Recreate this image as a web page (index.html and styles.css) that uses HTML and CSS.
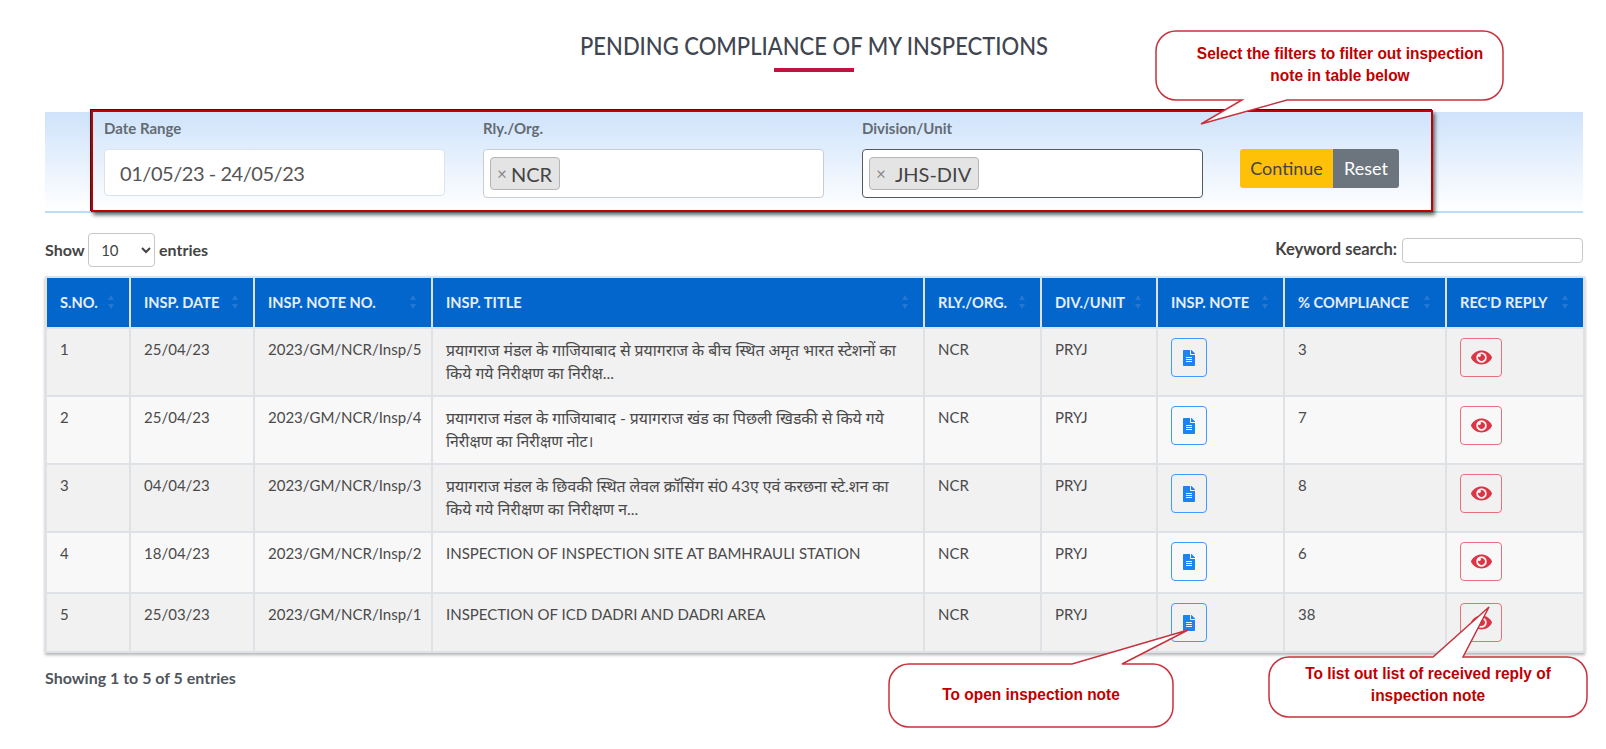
FILE: index.html
```html
<!DOCTYPE html>
<html lang="en">
<head>
<meta charset="utf-8">
<title>Pending Compliance</title>
<link rel="stylesheet" href="styles.css">
</head>
<body>
<svg class="defs" width="0" height="0" aria-hidden="true">
  <symbol id="doc" viewBox="0 0 384 512"><path d="M224 136V0H24C10.7 0 0 10.7 0 24v464c0 13.3 10.7 24 24 24h336c13.3 0 24-10.7 24-24V160H248c-13.2 0-24-10.8-24-24zm64 236c0 6.6-5.4 12-12 12H108c-6.6 0-12-5.4-12-12v-8c0-6.6 5.4-12 12-12h168c6.6 0 12 5.4 12 12v8zm0-64c0 6.6-5.4 12-12 12H108c-6.6 0-12-5.4-12-12v-8c0-6.6 5.4-12 12-12h168c6.6 0 12 5.4 12 12v8zm0-72v8c0 6.6-5.4 12-12 12H108c-6.6 0-12-5.4-12-12v-8c0-6.6 5.4-12 12-12h168c6.6 0 12 5.4 12 12zm96-114.1v6.1H256V0h6.1c6.4 0 12.5 2.5 17 7l97.9 98c4.5 4.5 7 10.6 7 16.9z"/></symbol>
  <symbol id="eye" viewBox="0 0 576 512"><path d="M572.52 241.4C518.29 135.59 410.93 64 288 64S57.68 135.64 3.48 241.41a32.35 32.35 0 0 0 0 29.19C57.71 376.41 165.07 448 288 448s230.32-71.64 284.52-177.41a32.35 32.35 0 0 0 0-29.19zM288 400a144 144 0 1 1 144-144 143.93 143.93 0 0 1-144 144zm0-240a95.31 95.31 0 0 0-25.31 3.79 47.85 47.85 0 0 1-66.9 66.9A95.78 95.78 0 1 0 288 160z"/></symbol>
  <symbol id="sort" viewBox="0 0 8 16"><path class="up" d="M4 1l3 5H1z"/><path class="down" d="M4 15l3-5H1z"/></symbol>
</svg>

<main class="page">
  <h1 class="title">PENDING COMPLIANCE OF MY INSPECTIONS</h1>
  <div class="rule"></div>

  <section class="filters">
    <div class="field">
      <label class="field-label">Date Range</label>
      <div class="control control-date">01/05/23 - 24/05/23</div>
    </div>
    <div class="field">
      <label class="field-label">Rly./Org.</label>
      <div class="control control-select"><span class="tag"><span class="tag-x">×</span>NCR</span></div>
    </div>
    <div class="field">
      <label class="field-label">Division/Unit</label>
      <div class="control control-select control-focus"><span class="tag"><span class="tag-x tag-x-wide">×</span>JHS-DIV</span></div>
    </div>
    <div class="btn-group">
      <button class="btn btn-continue">Continue</button>
      <button class="btn btn-reset">Reset</button>
    </div>
  </section>

  <div class="table-tools">
    <div class="length">Show
      <select class="length-select"><option>10</option></select>
      entries</div>
    <div class="search">Keyword search: <input class="search-input" type="text"></div>
  </div>

  <table class="grid">
    <colgroup>
      <col class="c1"><col class="c2"><col class="c3"><col class="c4"><col class="c5"><col class="c6"><col class="c7"><col class="c8"><col class="c9">
    </colgroup>
    <thead>
      <tr>
        <th>S.NO.<svg class="sort sort-active"><use href="#sort"/></svg></th>
        <th>INSP. DATE<svg class="sort"><use href="#sort"/></svg></th>
        <th>INSP. NOTE NO.<svg class="sort"><use href="#sort"/></svg></th>
        <th>INSP. TITLE<svg class="sort"><use href="#sort"/></svg></th>
        <th>RLY./ORG.<svg class="sort"><use href="#sort"/></svg></th>
        <th>DIV./UNIT<svg class="sort"><use href="#sort"/></svg></th>
        <th>INSP. NOTE<svg class="sort"><use href="#sort"/></svg></th>
        <th>% COMPLIANCE<svg class="sort"><use href="#sort"/></svg></th>
        <th>REC'D REPLY<svg class="sort"><use href="#sort"/></svg></th>
      </tr>
    </thead>
    <tbody>
      <tr>
        <td>1</td><td>25/04/23</td><td>2023/GM/NCR/Insp/5</td>
        <td class="hi">प्रयागराज मंडल के गाजियाबाद से प्रयागराज के बीच स्थित अमृत भारत स्टेशनों का किये गये निरीक्षण का निरीक्ष...</td>
        <td>NCR</td><td>PRYJ</td>
        <td><a class="icon-btn icon-doc"><svg class="i-doc"><use href="#doc"/></svg></a></td>
        <td>3</td>
        <td><a class="icon-btn icon-eye"><svg class="i-eye"><use href="#eye"/></svg></a></td>
      </tr>
      <tr>
        <td>2</td><td>25/04/23</td><td>2023/GM/NCR/Insp/4</td>
        <td class="hi">प्रयागराज मंडल के गाजियाबाद - प्रयागराज खंड का पिछली खिडकी से किये गये निरीक्षण का निरीक्षण नोट।</td>
        <td>NCR</td><td>PRYJ</td>
        <td><a class="icon-btn icon-doc"><svg class="i-doc"><use href="#doc"/></svg></a></td>
        <td>7</td>
        <td><a class="icon-btn icon-eye"><svg class="i-eye"><use href="#eye"/></svg></a></td>
      </tr>
      <tr>
        <td>3</td><td>04/04/23</td><td>2023/GM/NCR/Insp/3</td>
        <td class="hi">प्रयागराज मंडल के छिवकी स्थित लेवल क्रॉसिंग सं0 43ए एवं करछना स्टे.शन का किये गये निरीक्षण का निरीक्षण न...</td>
        <td>NCR</td><td>PRYJ</td>
        <td><a class="icon-btn icon-doc"><svg class="i-doc"><use href="#doc"/></svg></a></td>
        <td>8</td>
        <td><a class="icon-btn icon-eye"><svg class="i-eye"><use href="#eye"/></svg></a></td>
      </tr>
      <tr>
        <td>4</td><td>18/04/23</td><td>2023/GM/NCR/Insp/2</td>
        <td>INSPECTION OF INSPECTION SITE AT BAMHRAULI STATION</td>
        <td>NCR</td><td>PRYJ</td>
        <td><a class="icon-btn icon-doc"><svg class="i-doc"><use href="#doc"/></svg></a></td>
        <td>6</td>
        <td><a class="icon-btn icon-eye"><svg class="i-eye"><use href="#eye"/></svg></a></td>
      </tr>
      <tr>
        <td>5</td><td>25/03/23</td><td>2023/GM/NCR/Insp/1</td>
        <td>INSPECTION OF ICD DADRI AND DADRI AREA</td>
        <td>NCR</td><td>PRYJ</td>
        <td><a class="icon-btn icon-doc"><svg class="i-doc"><use href="#doc"/></svg></a></td>
        <td>38</td>
        <td><a class="icon-btn icon-eye"><svg class="i-eye"><use href="#eye"/></svg></a></td>
      </tr>
    </tbody>
  </table>

  <p class="info">Showing 1 to 5 of 5 entries</p>
</main>

<div class="highlight-box"></div>

<svg class="callouts" width="1606" height="749" viewBox="0 0 1606 749">
  <path class="bubble" d="M1176 31H1483a20 20 0 0 1 20 20V80a20 20 0 0 1-20 20H1287L1201 124L1242 100H1176a20 20 0 0 1-20-20V51a20 20 0 0 1 20-20Z"/>
  <path class="bubble" d="M909 664H1072L1188 630L1122 664H1153a20 20 0 0 1 20 20V707a20 20 0 0 1-20 20H909a20 20 0 0 1-20-20V684a20 20 0 0 1 20-20Z"/>
  <path class="bubble" d="M1289 657H1433L1489 607L1463 657H1567a20 20 0 0 1 20 20V697a20 20 0 0 1-20 20H1289a20 20 0 0 1-20-20V677a20 20 0 0 1 20-20Z"/>
</svg>
<div class="note note-a">Select the filters to filter out inspection<br>note in table below</div>
<div class="note note-b">To open inspection note</div>
<div class="note note-c">To list out list of received reply of<br>inspection note</div>
</body>
</html>
```
FILE: styles.css
```css
* { box-sizing: border-box; }
html, body { margin: 0; padding: 0; }
body {
  position: relative;
  width: 1606px;
  height: 749px;
  overflow: hidden;
  background: #fff;
  font-family: Lato, "Noto Sans", "Noto Sans Devanagari", sans-serif;
  font-size: 15px;
  color: #444;
}
.defs { position: absolute; }

.page { padding: 30px 23px 0 45px; }

.title {
  margin: 0;
  font-size: 24px;
  line-height: 32px;
  font-weight: 500;
  text-align: center;
  color: #3f4650;
  transform: scaleX(.917);
}
.rule {
  width: 80px;
  height: 4px;
  margin: 6px auto 40px;
  background: #c2123f;
}

.filters {
  display: flex;
  gap: 38px;
  height: 101px;
  padding: 6px 0 0 59px;
  background: linear-gradient(#cfe3fb, #fff);
  border-bottom: 2px solid #bcdcf7;
}
.field { width: 341px; }
.field-label {
  display: block;
  height: 20px;
  margin-bottom: 11px;
  font-size: 15px;
  line-height: 20px;
  font-weight: 700;
  color: #646b73;
}
.control {
  display: flex;
  align-items: center;
  height: 49px;
  background: #fff;
  border: 1px solid #c9ccd0;
  border-radius: 4px;
  font-size: 20px;
  color: #555;
}
.control-date {
  height: 47px;
  margin-top: 1px;
  padding-left: 15px;
  border-color: #dde3ea;
  letter-spacing: -.45px;
}
.control-select { padding-left: 6px; }
.control-focus { border-color: #555a60; }
.tag {
  display: inline-flex;
  align-items: center;
  height: 33px;
  padding: 0 7px 0 6px;
  background: #e4e4e4;
  border: 1px solid #b5b5b5;
  border-radius: 4px;
  color: #444;
}
.tag-x { font-size: 17px; color: #888; margin-right: 4px; }
.tag-x-wide { margin-right: 9px; }

.btn-group { display: flex; height: 39px; margin: 31px 0 0 -1px; }
.btn {
  height: 39px;
  border: 0;
  font-family: inherit;
  font-size: 18px;
  padding: 0 0 2px;
}
.btn-continue { width: 93px; background: #ffc107; color: #444; border-radius: 3px 0 0 3px; }
.btn-reset { width: 66px; background: #6c757d; color: #fff; border-radius: 0 3px 3px 0; }

.table-tools {
  display: flex;
  justify-content: space-between;
  align-items: center;
  height: 34px;
  margin: 20px 0 9px;
  font-weight: 700;
  font-size: 16px;
  color: #444;
}
.length-select {
  width: 67px;
  height: 34px;
  margin: 0;
  padding-left: 8px;
  font-family: inherit;
  font-size: 15px;
  color: #444;
  background: #fff;
  border: 1px solid #c6c6c6;
  border-radius: 4px;
}
.search { font-size: 16.5px; }
.search-input {
  width: 181px;
  height: 25px;
  margin-left: 1px;
  vertical-align: middle;
  border: 1px solid #c6c6c6;
  border-radius: 4px;
  background: #fff;
}

.grid {
  width: 1538px;
  table-layout: fixed;
  border-collapse: collapse;
  border: 2px solid #dee2e6;
  box-shadow: 0 2px 3px rgba(0, 0, 0, .3);
}
.c1 { width: 84px; }
.c2 { width: 124px; }
.c3 { width: 178px; }
.c4 { width: 492px; }
.c5 { width: 117px; }
.c6 { width: 116px; }
.c7 { width: 127px; }
.c8 { width: 162px; }
.c9 { width: 138px; }

.grid th {
  height: 51px;
  padding: 0 13px;
  background: #0266cc;
  border: 2px solid #dee2e6;
  border-top: 0;
  font-size: 14.6px;
  font-weight: 700;
  color: #e6eef8;
  text-align: left;
  white-space: nowrap;
}
.sort {
  float: right;
  width: 8px;
  height: 16px;
  margin-right: 1px;
  fill: #2478d2;
}
.sort-active .up { fill: #c6dcf4; }

.grid td {
  padding: 9px 13px 11px;
  border: 2px solid #dee2e6;
  line-height: 23px;
  vertical-align: top;
  color: #4a4a4a;
}
.grid tbody tr:nth-child(odd) td { background: #f1f1f1; }
.grid tbody tr:nth-child(even) td { background: #f8f8f8; }
.grid tbody tr:last-child td { padding-bottom: 9px; }
.grid td.hi { font-size: 15.8px; }

.icon-btn {
  display: flex;
  align-items: center;
  justify-content: center;
  height: 39px;
  border-radius: 4px;
  border: 1px solid;
}
.icon-doc { width: 36px; border-color: #3f9bff; }
.icon-eye { width: 42px; border-color: #e5717b; }
.i-doc { width: 14px; height: 16px; fill: #1a84f5; }
.i-eye { width: 21px; height: 19px; fill: #dc3545; }

.info {
  margin: 15px 0 0;
  font-size: 16px;
  line-height: 20px;
  font-weight: 700;
  color: #50565c;
}

/* Annotations laid over the screenshot */
.highlight-box {
  position: absolute;
  left: 91px;
  top: 110px;
  width: 1342px;
  height: 102px;
  border: 2px solid #c00000;
  box-shadow: -1px -1px 0 #222, 2px 3px 4px rgba(0, 0, 0, .6);
}
.callouts { position: absolute; left: 0; top: 0; pointer-events: none; }
.bubble { fill: #fff; stroke: #c8323c; stroke-width: 1.5; }
.note {
  position: absolute;
  font-family: "Liberation Sans", sans-serif;
  font-size: 17px;
  line-height: 22px;
  font-weight: 700;
  color: #c00000;
  text-align: center;
  white-space: nowrap;
  transform: scaleX(.91);
}
.note-a { left: 1156px; top: 43px; width: 368px; }
.note-b { left: 889px; top: 684px; width: 284px; }
.note-c { left: 1269px; top: 663px; width: 318px; }
```
